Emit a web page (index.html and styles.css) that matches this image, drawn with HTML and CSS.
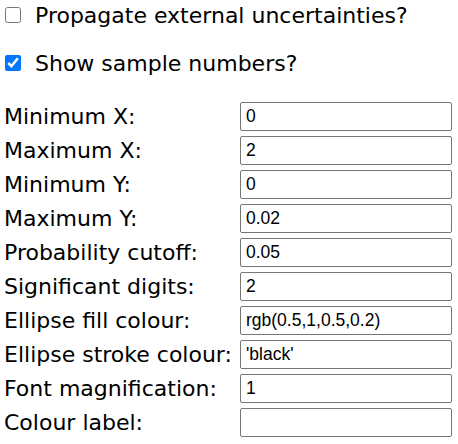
FILE: index.html
```html
<!DOCTYPE html>
<html>
<head>
<meta charset="utf-8">
<link rel="stylesheet" href="styles.css">
</head>
<body>
<div class="checks">
  <label class="check"><input type="checkbox"><span>Propagate external uncertainties?</span></label>
  <label class="check"><input type="checkbox" checked><span>Show sample numbers?</span></label>
</div>
<div class="form">
  <span class="lbl">Minimum X:</span><input type="text" value="0">
  <span class="lbl">Maximum X:</span><input type="text" value="2">
  <span class="lbl">Minimum Y:</span><input type="text" value="0">
  <span class="lbl">Maximum Y:</span><input type="text" value="0.02">
  <span class="lbl">Probability cutoff:</span><input type="text" value="0.05">
  <span class="lbl">Significant digits:</span><input type="text" value="2">
  <span class="lbl">Ellipse fill colour:</span><input type="text" value="rgb(0.5,1,0.5,0.2)">
  <span class="lbl">Ellipse stroke colour:</span><input type="text" value="'black'">
  <span class="lbl">Font magnification:</span><input type="text" value="1">
  <span class="lbl">Colour label:</span><input type="text" value="">
</div>
</body>
</html>
```
FILE: styles.css
```css
body {
  margin: 0;
  padding: 0 4px;
  font-family: "DejaVu Sans", Verdana, sans-serif;
  font-size: 22px;
  color: #000;
  background: #fff;
}
.checks {
  display: flex;
  flex-direction: column;
  gap: 18px;
}
.check {
  display: flex;
  align-items: center;
  height: 30px;
}
.check input {
  width: 16px;
  height: 16px;
  margin: 0 14px 0 1px;
  accent-color: #0075ff;
}
.form {
  display: grid;
  grid-template-columns: 236px 212px;
  grid-auto-rows: 34px;
  align-items: center;
  margin-top: 21px;
}
.lbl {
  white-space: nowrap;
  line-height: 26px;
  padding-top: 1px;
}
.form input {
  box-sizing: border-box;
  width: 212px;
  height: 29px;
  margin: 0;
  font-family: "Liberation Sans", Arial, sans-serif;
  font-size: 17.5px;
  padding: 1px 5px;
  border: 1px solid #767676;
  border-radius: 2px;
  color: #000;
  background: #fff;
}
```
